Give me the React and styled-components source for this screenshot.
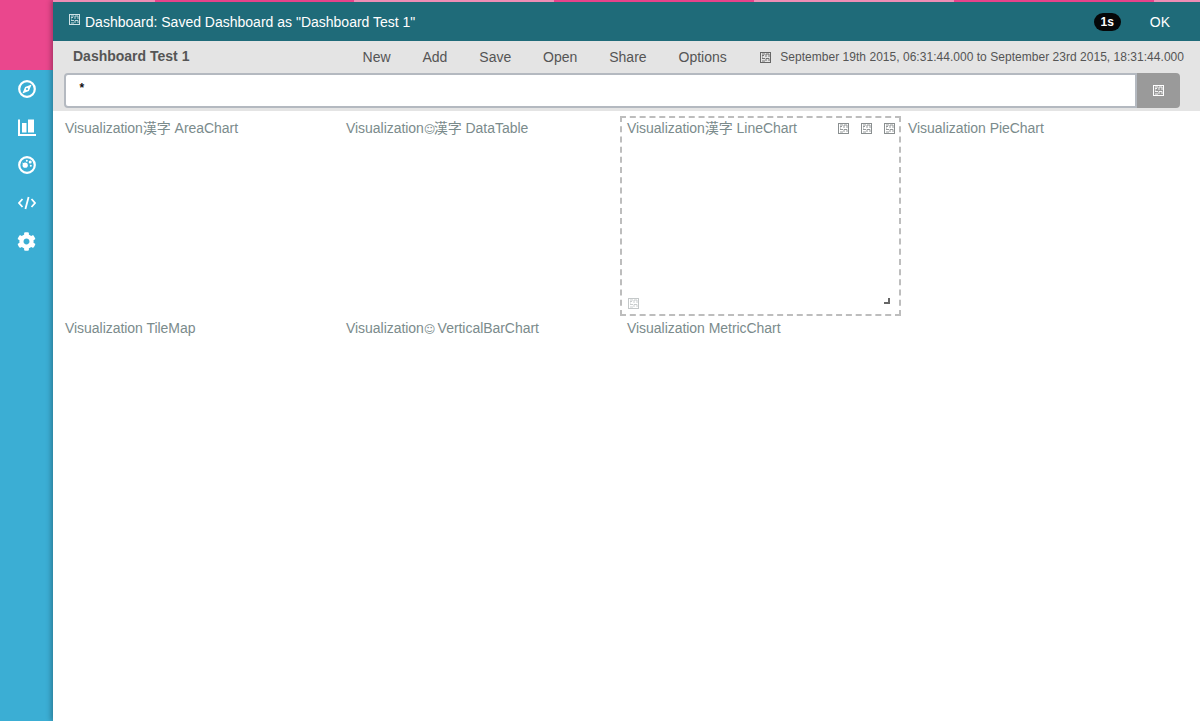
import React from 'react';
import styled, { createGlobalStyle } from 'styled-components';
import { FaCog } from 'react-icons/fa';

const Global = createGlobalStyle`
  html, body { margin: 0; padding: 0; height: 721px; overflow: hidden; background: #fff; }
  body { font-family: "Liberation Sans", "Noto Sans CJK JP", sans-serif; -webkit-font-smoothing: antialiased; }
`;

const Page = styled.div`
  display: flex;
  height: 721px;
  width: 1200px;
`;

const Sidebar = styled.nav`
  width: 53px;
  flex: none;
  display: flex;
  flex-direction: column;
  background: #3baed4;
`;

const Brand = styled.div`
  height: 70px;
  background: #ea478d;
`;

const SideItems = styled.div`
  display: flex;
  flex-direction: column;
`;

const SideItem = styled.a`
  height: 38px;
  display: flex;
  align-items: center;
  justify-content: center;
  color: #fff;
`;

const Main = styled.main`
  flex: 1;
  display: flex;
  flex-direction: column;
  min-width: 0;
  position: relative;
  background: #fff;
  box-shadow: -2px 0 5px rgba(0, 0, 0, 0.28);
`;

const Progress = styled.div`
  height: 2px;
  background: linear-gradient(to right, #ef8db5 0 102px, #e8428a 102px 301px, #ef8db5 301px 501px, #e8428a 501px 701px, #ef8db5 701px 901px, #e8428a 901px 1101px, #ef8db5 1101px);
`;

const Notice = styled.div`
  height: 39px;
  display: flex;
  align-items: center;
  padding: 0 30px 0 16px;
  background: #1f6b79;
  color: #fff;
  font-size: 14px;
`;

const NoticeIcon = styled.span`
  display: flex;
  margin-top: -5px;
`;

const NoticeText = styled.span`
  flex: 1;
  margin-left: 5px;
`;

const Timer = styled.span`
  width: 27px;
  height: 18px;
  border-radius: 9px;
  background: #050708;
  color: #fff;
  font-size: 12px;
  font-weight: bold;
  line-height: 18px;
  text-align: center;
  margin-right: 29px;
`;

const Ok = styled.span`
  font-size: 14px;
`;

const Tools = styled.div`
  background: #e4e4e4;
  height: 70px;
  display: flex;
  flex-direction: column;
`;

const NavRow = styled.div`
  height: 32px;
  display: flex;
  align-items: center;
  padding: 0 16px 0 20px;
  color: #555;
`;

const Title = styled.strong`
  flex: 1;
  font-size: 14px;
  margin-top: -2px;
`;

const Menu = styled.div`
  display: flex;
  gap: 31.9px;
  font-size: 14px;
`;

const Range = styled.div`
  display: flex;
  align-items: center;
  gap: 9px;
  margin-left: 33.5px;
  font-size: 12px;
  letter-spacing: 0.03px;
  white-space: nowrap;
`;

const SearchRow = styled.div`
  display: flex;
  height: 35px;
  margin: 0 20px 0 10.5px;
`;

const SearchInput = styled.div`
  flex: 1;
  box-sizing: border-box;
  background: #fff;
  border: 2px solid #b4b9c0;
  border-radius: 4px 0 0 4px;
  padding: 3px 14px;
  font-size: 12px;
  font-weight: bold;
  color: #111;
  line-height: 20px;
`;

const SearchButton = styled.div`
  width: 43px;
  display: flex;
  align-items: center;
  justify-content: center;
  background: #9a9a9a;
  border-radius: 0 4px 4px 0;
`;

const Grid = styled.section`
  display: grid;
  grid-template-columns: repeat(4, 281px);
  grid-auto-rows: 200px;
  padding: 5px 0 0 5px;
`;

const Panel = styled.article`
  box-sizing: border-box;
  display: flex;
  flex-direction: column;
  padding: 2px 5px 5px;
  border: 2px ${p => (p.$active ? 'dashed #bdbdbd' : 'solid transparent')};
`;

const PanelHead = styled.header`
  display: flex;
  align-items: center;
  justify-content: space-between;
  height: 16px;
`;

const PanelTitle = styled.span`
  font-size: 14px;
  line-height: 16px;
  letter-spacing: -0.04px;
  color: #7b8b8c;
  white-space: nowrap;
`;

const Smile = styled.span`
  font-family: "DejaVu Sans", sans-serif;
  font-size: 11px;
  line-height: 1;
  margin-right: -1.5px;
`;

const PanelActions = styled.div`
  display: flex;
  gap: 12px;
  margin-right: -1px;
`;

const PanelFoot = styled.footer`
  margin-top: auto;
  display: flex;
  align-items: flex-end;
  justify-content: space-between;
  margin-left: 1px;
`;

const Handle = styled.span`
  width: 4px;
  height: 4px;
  margin: 0 4px 5px 0;
  border-right: 2px solid #666;
  border-bottom: 2px solid #666;
`;

const Tofu = ({ color = '#fff' }) => (
  <svg width="11" height="11" viewBox="0 0 11 11" style={{ flex: 'none' }}>
    <rect x="0.5" y="0.5" width="10" height="10" fill="none" stroke={color} />
    <path d="M2 2h3M2 3.5h2M2 5h1M6 2h3M6 2v3M9 2v3M2 6.5h3M2 9h3M6 6.5h3M6 6.5v2.5M9 6.5v2.5" stroke={color} strokeWidth="0.9" fill="none" />
  </svg>
);

const CompassIcon = () => (
  <svg width="18" height="18" viewBox="0 0 18 18">
    <circle cx="9" cy="9" r="7.8" fill="none" stroke="#fff" strokeWidth="2.2" />
    <path d="M13.6 4.4 10.9 10.9 4.4 13.6 7.1 7.1Z" fill="#fff" />
    <circle cx="9" cy="9" r="1.1" fill="#3baed4" />
  </svg>
);

const BarsIcon = () => (
  <svg width="18" height="17" viewBox="0 0 18 17">
    <path d="M0 0.5h2v14.5h16v2H0Z" fill="#fff" />
    <rect x="4" y="4" width="4.5" height="9.5" fill="#fff" />
    <rect x="10" y="0.5" width="6" height="13" fill="#fff" />
  </svg>
);

const GaugeIcon = () => (
  <svg width="18" height="18" viewBox="0 0 18 18">
    <circle cx="9" cy="9" r="7.8" fill="none" stroke="#fff" strokeWidth="2.2" />
    <circle cx="7.2" cy="9.2" r="2.6" fill="#fff" />
    <path d="M4 6.5 8.5 8.5 7 11Z" fill="#fff" />
    <circle cx="8.8" cy="4.8" r="1" fill="#fff" />
    <circle cx="12.2" cy="6" r="1.5" fill="#fff" />
    <circle cx="12.8" cy="9.8" r="1" fill="#fff" />
  </svg>
);

const CodeIcon = () => (
  <svg width="18" height="14" viewBox="0 0 18 14" fill="none" stroke="#fff" strokeWidth="1.8">
    <path d="M4.5 3 1 7l3.5 4M13.5 3 17 7l-3.5 4M10.6 1 7.4 13" />
  </svg>
);

const menu = ['New', 'Add', 'Save', 'Open', 'Share', 'Options'];

const panels = [
  { lead: 'Visualization', rest: '漢字 AreaChart' },
  { lead: 'Visualization', smile: true, rest: '漢字 DataTable' },
  { lead: 'Visualization', rest: '漢字 LineChart', active: true },
  { lead: 'Visualization', rest: ' PieChart' },
  { lead: 'Visualization', rest: ' TileMap' },
  { lead: 'Visualization', smile: true, rest: ' VerticalBarChart' },
  { lead: 'Visualization', rest: ' MetricChart' },
];

export default function App() {
  return (
    <Page>
      <Global />
      <Sidebar>
        <Brand />
        <SideItems>
          <SideItem><CompassIcon /></SideItem>
          <SideItem><BarsIcon /></SideItem>
          <SideItem><GaugeIcon /></SideItem>
          <SideItem><CodeIcon /></SideItem>
          <SideItem><FaCog size={19} /></SideItem>
        </SideItems>
      </Sidebar>
      <Main>
        <Progress />
        <Notice>
          <NoticeIcon><Tofu color="#cfe3e6" /></NoticeIcon>
          <NoticeText>Dashboard: Saved Dashboard as "Dashboard Test 1"</NoticeText>
          <Timer>1s</Timer>
          <Ok>OK</Ok>
        </Notice>
        <Tools>
          <NavRow>
            <Title>Dashboard Test 1</Title>
            <Menu>
              {menu.map(m => <span key={m}>{m}</span>)}
            </Menu>
            <Range>
              <Tofu color="#666" />
              <span>September 19th 2015, 06:31:44.000 to September 23rd 2015, 18:31:44.000</span>
            </Range>
          </NavRow>
          <SearchRow>
            <SearchInput>*</SearchInput>
            <SearchButton><Tofu color="#fff" /></SearchButton>
          </SearchRow>
        </Tools>
        <Grid>
          {panels.map(p => (
            <Panel key={p.rest} $active={p.active}>
              <PanelHead>
                <PanelTitle>
                  {p.lead}
                  {p.smile && <Smile>☺</Smile>}
                  {p.rest}
                </PanelTitle>
                {p.active && (
                  <PanelActions>
                    <Tofu color="#8a8f90" />
                    <Tofu color="#8a8f90" />
                    <Tofu color="#8a8f90" />
                  </PanelActions>
                )}
              </PanelHead>
              {p.active && (
                <PanelFoot>
                  <Tofu color="#c4c8c9" />
                  <Handle />
                </PanelFoot>
              )}
            </Panel>
          ))}
        </Grid>
      </Main>
    </Page>
  );
}
